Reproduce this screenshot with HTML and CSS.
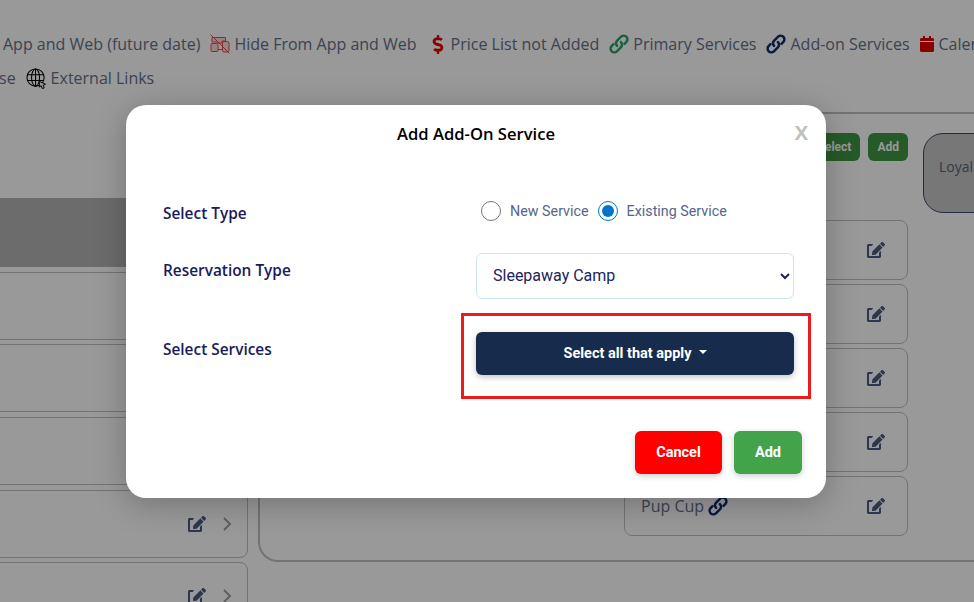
FILE: index.html
```html
<!DOCTYPE html>
<html lang="en">
<head>
<meta charset="utf-8">
<title>Add Add-On Service</title>
<link rel="stylesheet" href="styles.css">
</head>
<body>
<svg class="defs" aria-hidden="true">
  <defs>
    <symbol id="i-link" viewBox="1 1 18 18"><g fill="none" stroke="currentColor" stroke-width="2.200" stroke-linecap="round"><path d="M8.300 11.700a3.400 3.400 0 0 1 0-4.800l3.600-3.600a3.400 3.400 0 0 1 4.800 4.800l-1.800 1.800"/><path d="M11.700 8.300a3.400 3.400 0 0 1 0 4.800l-3.600 3.600a3.400 3.400 0 0 1-4.800-4.800l1.800-1.800"/></g></symbol>
    <symbol id="i-edit" viewBox="0 0 576 512"><path fill="currentColor" d="M402.6 83.2l90.2 90.2c3.8 3.8 3.8 10 0 13.8L274.4 405.6l-92.8 10.3c-12.4 1.4-22.9-9.1-21.5-21.5l10.3-92.8L388.8 83.2c3.8-3.8 10-3.8 13.8 0zm162-22.9l-48.8-48.8c-15.2-15.2-39.9-15.2-55.2 0l-35.4 35.4c-3.8 3.8-3.8 10 0 13.8l90.2 90.2c3.8 3.8 10 3.8 13.8 0l35.4-35.4c15.2-15.3 15.2-40 0-55.2zM384 346.2V448H64V128h73.9c3.2 0 6.2-1.3 8.5-3.5l40-40c7.6-7.6 2.2-20.5-8.5-20.5H48C21.5 64 0 85.5 0 112v352c0 26.5 21.5 48 48 48h352c26.5 0 48-21.5 48-48V306.2c0-10.7-12.9-16-20.5-8.5l-40 40c-2.2 2.3-3.5 5.3-3.5 8.5z"/></symbol>
    <symbol id="i-chev" viewBox="0 0 10 16"><path fill="none" stroke="currentColor" stroke-width="1.800" d="M2 2l6 6-6 6"/></symbol>
  </defs>
</svg>

<div class="page">
  <div class="legend legend-one">
    <span class="legend-item">App and Web (future date)</span>
    <span class="legend-item">
      <svg class="ic-hide" viewBox="0 0 20 20"><g fill="currentColor" fill-opacity=".2" stroke="currentColor" stroke-width="1"><path d="M2 8V3.500h13.500V7H12v2H8V8z"/><rect x="1" y="9.500" width="7" height="8" rx="1"/><path d="M8 15.500h4" fill="none"/><rect x="12.500" y="7.500" width="6.500" height="10.500" rx="1.500"/><path d="M0.500 0.500L19.500 19.500" fill="none"/></g></svg>
      Hide From App and Web
    </span>
    <span class="legend-item">
      <svg class="ic-dollar" viewBox="0 0 288 512"><path fill="currentColor" d="M209.2 233.4l-108-31.6C88.7 198.2 80 186.5 80 173.5c0-16.3 13.2-29.5 29.5-29.5h66.3c12.2 0 24.2 3.7 34.2 10.5 6.1 4.1 14.3 3.1 19.5-2l34.8-34c7.1-6.9 6.1-18.4-1.8-24.5C238 74.8 207.4 64.1 176 64V16c0-8.8-7.2-16-16-16h-32c-8.8 0-16 7.2-16 16v48h-2.5C45.8 64-5.4 118.7.5 183.6c4.2 46.1 39.4 83.6 83.8 96.6l102.5 30c12.5 3.7 21.2 15.3 21.2 28.3 0 16.3-13.2 29.5-29.5 29.5h-66.3C100 368 88 364.3 78 357.5c-6.1-4.1-14.3-3.1-19.5 2l-34.8 34c-7.1 6.9-6.1 18.4 1.8 24.5 24.5 19.2 55.1 29.9 86.5 30v48c0 8.8 7.2 16 16 16h32c8.8 0 16-7.2 16-16v-48.2c46.6-.9 90.3-28.6 105.7-72.7 21.500-61.6-14.6-124.8-72.5-141.7z"/></svg>
      Price List not Added
    </span>
    <span class="legend-item"><svg class="ic-link ic-primary"><use href="#i-link"/></svg>Primary Services</span>
    <span class="legend-item"><svg class="ic-link ic-addon"><use href="#i-link"/></svg>Add-on Services</span>
    <span class="legend-item legend-cal">
      <svg class="ic-cal" viewBox="0 0 448 512"><path fill="currentColor" d="M12 192h424c6.6 0 12 5.4 12 12v260c0 26.5-21.500 48-48 48H48c-26.500 0-48-21.500-48-48V204c0-6.600 5.400-12 12-12zm436-44v-36c0-26.500-21.500-48-48-48h-48V12c0-6.600-5.400-12-12-12h-40c-6.600 0-12 5.400-12 12v52H160V12c0-6.600-5.400-12-12-12h-40c-6.600 0-12 5.400-12 12v52H48C21.500 64 0 85.500 0 112v36c0 6.600 5.400 12 12 12h424c6.600 0 12-5.400 12-12z"/></svg>
      Calendar
    </span>
  </div>
  <div class="legend legend-two">
    <span class="legend-item">se</span>
    <span class="legend-item">
      <svg class="ic-globe" viewBox="0 0 22 22"><g fill="none" stroke="currentColor" stroke-width="1.100"><circle cx="10" cy="10" r="9"/><ellipse cx="10" cy="10" rx="4.200" ry="9"/><path d="M10 1v18M1.500 7h17M1.500 13h17"/></g><path d="M14 14l6.500 3-2.500 1 1 3-2 .5-1-3-2 1.500z" fill="#fff" stroke="currentColor" stroke-width="1"/></svg>
      External Links
    </span>
  </div>

  <div class="content">
    <div class="left-col">
      <div class="left-head"></div>
      <div class="left-card"></div>
      <div class="left-card"></div>
      <div class="left-card"></div>
      <div class="left-card"><svg class="ic-edit"><use href="#i-edit"/></svg><svg class="ic-chev"><use href="#i-chev"/></svg></div>
      <div class="left-card"><svg class="ic-edit"><use href="#i-edit"/></svg><svg class="ic-chev"><use href="#i-chev"/></svg></div>
    </div>
    <div class="panel">
      <div class="panel-main">
        <div class="toolbar">
          <button class="mini-btn" type="button">Select</button>
          <button class="mini-btn" type="button">Add</button>
        </div>
        <div class="svc-list">
          <div class="svc-card"><svg class="ic-edit"><use href="#i-edit"/></svg></div>
          <div class="svc-card"><svg class="ic-edit"><use href="#i-edit"/></svg></div>
          <div class="svc-card"><svg class="ic-edit"><use href="#i-edit"/></svg></div>
          <div class="svc-card"><svg class="ic-edit"><use href="#i-edit"/></svg></div>
          <div class="svc-card"><span class="svc-name">Pup Cup<svg class="ic-link ic-addon"><use href="#i-link"/></svg></span><svg class="ic-edit"><use href="#i-edit"/></svg></div>
        </div>
      </div>
      <div class="loyal">Loyal</div>
    </div>
  </div>

  <div class="backdrop"></div>

  <div class="modal" role="dialog" aria-label="Add Add-On Service">
    <div class="modal-head">
      <h2 class="modal-title">Add Add-On Service</h2>
      <span class="modal-close">X</span>
    </div>
    <div class="row row-type">
      <div class="row-label">Select Type</div>
      <div class="radios">
        <label class="radio"><input type="radio" name="kind">New Service</label>
        <label class="radio"><input type="radio" name="kind" checked>Existing Service</label>
      </div>
    </div>
    <div class="row row-res">
      <div class="row-label">Reservation Type</div>
      <select class="select"><option>Sleepaway Camp</option></select>
    </div>
    <div class="row row-svc">
      <div class="row-label">Select Services</div>
      <div class="highlight-wrap">
        <button class="dropdown" type="button">Select all that apply<span class="caret"></span></button>
        <span class="highlight"></span>
      </div>
    </div>
    <div class="modal-foot">
      <button class="btn btn-cancel" type="button">Cancel</button>
      <button class="btn btn-add" type="button">Add</button>
    </div>
  </div>
</div>
</body>
</html>
```

FILE: styles.css
```css
* { box-sizing: border-box; }
html, body { margin: 0; padding: 0; }
body { background: #fff; font-family: "Open Sans", "Noto Sans", sans-serif; color: #67718f; }
.defs { display: none; }
.page { position: relative; width: 974px; height: 602px; overflow: hidden; }

/* legend */
.legend { display: flex; align-items: center; height: 24px; font-size: 16px; line-height: 24px; white-space: nowrap; color: #657089; }
.legend-one { margin-top: 32px; padding-left: 3px; gap: 10px; }
.legend-two { margin-top: 10px; margin-left: -1px; gap: 10px; }
.legend-item { display: inline-flex; align-items: center; gap: 4px; flex-shrink: 0; }
.legend-cal { gap: 5px; }
.ic-hide { width: 20px; height: 20px; color: #e84a4a; }
.ic-dollar { width: 12px; height: 19px; color: #e60000; margin: 0 3px 0 5px; }
.ic-link { width: 20px; height: 20px; }
.ic-primary { color: #2aa06c; }
.ic-addon { color: #0c2a70; }
.ic-cal { width: 14px; height: 16px; color: #e60000; }
.ic-globe { width: 21px; height: 21px; color: #000; }

/* page behind the dialog */
.content { display: flex; gap: 10px; margin-top: 22px; margin-left: -20px; }
.left-col { flex: 0 0 268px; padding-top: 86px; display: flex; flex-direction: column; gap: 4.700px; }
.left-head { height: 69px; background: #b4b4b4; }
.left-card { flex: 0 0 68px; display: flex; align-items: center; justify-content: flex-end; gap: 16px; padding-right: 15px; border: 1px solid #c0c0c0; border-radius: 8px; }
.panel { flex: 0 0 800px; height: 450px; display: flex; gap: 15px; padding: 19px 0 0 364px; border: 2px solid #c0c0c0; border-right: 0; border-radius: 20px 0 0 20px; }
.panel-main { flex: 0 0 284px; }
.toolbar { display: flex; justify-content: flex-end; gap: 8px; height: 28px; margin-bottom: 59px; }
.mini-btn { height: 28px; padding: 0 9px; border: 0; border-radius: 6px; background: #409645; color: #fff; font-family: "Roboto", sans-serif; font-size: 12px; font-weight: 700; }
.svc-list { display: flex; flex-direction: column; gap: 4px; }
.svc-card { height: 60px; display: flex; align-items: center; justify-content: flex-end; position: relative; padding: 0 22px 0 16px; border: 1px solid #c0c0c0; border-radius: 8px; }
.svc-name { display: flex; align-items: center; gap: 4px; margin-right: auto; font-size: 16px; }
.ic-edit { width: 18px; height: 16px; color: #4c5a80; }
.ic-chev { width: 10px; height: 16px; color: #999; }
.loyal { flex: 0 0 100px; height: 80px; padding: 21px 0 0 15px; border: 1px solid #3b4a70; border-radius: 20px; background: #c6c6c6; font-size: 14px; line-height: 24px; color: #556080; }

/* dialog */
.backdrop { position: absolute; inset: 0; background: rgba(0, 0, 0, .4); }
.modal { position: absolute; left: 126px; top: 105px; width: 700px; height: 393px; padding: 0 24px 24px 37px; background: #fff; border-radius: 20px; box-shadow: 0 6px 32px rgba(0, 0, 0, .25); }
.modal-head { position: relative; height: 91px; margin-left: -37px; margin-right: -24px; padding-top: 16px; text-align: center; }
.modal-title { margin: 0; font-size: 16.600px; line-height: 26px; font-weight: 600; color: #000; }
.modal-close { position: absolute; right: 18px; top: 14px; font-size: 20px; line-height: 28px; font-weight: 700; color: #c0c0c0; }
.row { display: flex; align-items: flex-start; }
.row-res { margin-top: 27px; }
.row-svc { margin-top: 33px; }
.row-label { flex: 0 0 313px; padding-top: 6px; font-size: 15.400px; line-height: 24px; font-weight: 600; color: #1b1b5c; }
.radios { display: flex; align-items: center; gap: 9px; height: 30px; padding-left: 5px; }
.radio { display: inline-flex; align-items: center; gap: 9px; font-family: "Roboto", sans-serif; font-size: 14.300px; color: #57658a; }
.radio input { width: 20px; height: 20px; margin: 0; accent-color: #0075d0; }
.select { width: 318px; height: 46px; padding: 0 12px 2px; background: #fff; border: 1px solid #cde4f5; border-radius: 6px; font-family: "Roboto", sans-serif; font-size: 16px; color: #1d2360; }
.highlight-wrap { position: relative; width: 318px; }
.dropdown { display: flex; align-items: center; justify-content: center; width: 100%; height: 43px; padding-bottom: 2px; border: 0; border-radius: 6px; background: #172b4d; color: #fff; font-family: "Roboto", sans-serif; font-size: 14.500px; font-weight: 700; box-shadow: 0 2px 6px rgba(0, 0, 0, .25); }
.caret { width: 0; height: 0; margin-left: 7px; margin-top: -2px; border-left: 4px solid transparent; border-right: 4px solid transparent; border-top: 4px solid #fff; }
.highlight { position: absolute; inset: -19px -17px -24px -15px; border: 3px solid #ec1c1c; pointer-events: none; }
.modal-foot { display: flex; justify-content: flex-end; gap: 12px; margin-top: 56px; }
.btn { height: 43px; padding-bottom: 2px; border: 0; border-radius: 6px; color: #fff; font-family: "Roboto", sans-serif; font-size: 14.500px; font-weight: 700; box-shadow: 0 2px 6px rgba(0, 0, 0, .2); }
.btn-cancel { width: 87px; background: #ff0000; }
.btn-add { width: 68px; background: #43a34b; }
```
